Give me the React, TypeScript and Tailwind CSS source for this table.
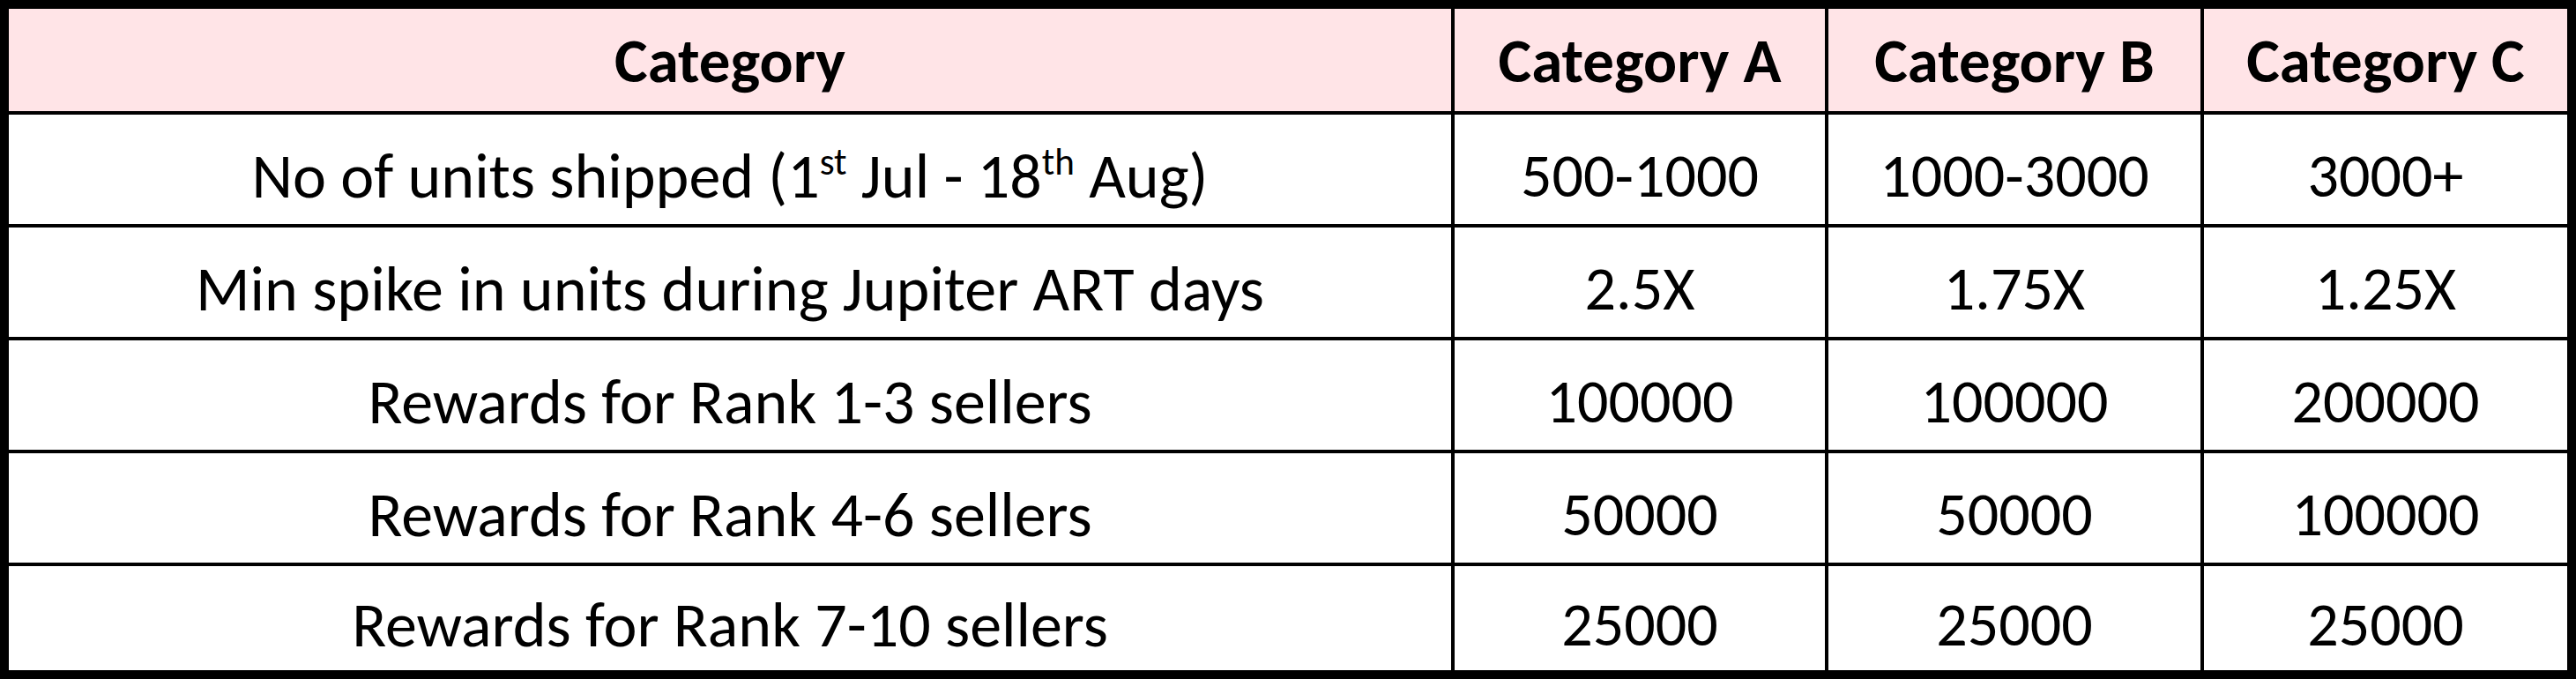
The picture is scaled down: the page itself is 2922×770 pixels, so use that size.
const HEADERS = ['Category', 'Category A', 'Category B', 'Category C'];

const sup = 'text-[0.6em] relative -top-[0.6em] align-baseline';

const ROWS: { label: React.ReactNode; values: string[] }[] = [
  {
    label: (
      <>
        No of units shipped (1<sup className={sup}>st</sup> Jul - 18<sup className={sup}>th</sup> Aug)
      </>
    ),
    values: ['500-1000', '1000-3000', '3000+'],
  },
  { label: 'Min spike in units during Jupiter ART days', values: ['2.5X', '1.75X', '1.25X'] },
  { label: 'Rewards for Rank 1-3 sellers', values: ['100000', '100000', '200000'] },
  { label: 'Rewards for Rank 4-6 sellers', values: ['50000', '50000', '100000'] },
  { label: 'Rewards for Rank 7-10 sellers', values: ['25000', '25000', '25000'] },
];

const font = "font-['Carlito','Calibri','Lato',sans-serif]";

export default function App() {
  return (
    <div className={`w-[2922px] h-[770px] bg-black p-[10px] ${font}`}>
      <div className="grid h-full gap-[4px] grid-cols-[1636px_420px_422px_412px] grid-rows-[116px_124px_124px_124px_124px_118px]">
        {HEADERS.map(h => (
          <div key={h} className="bg-[#ffe4e7] flex items-center justify-center text-[71px] font-bold text-black leading-none">
            {h}
          </div>
        ))}
        {ROWS.map((r, i) => (
          <>
            <div key={`l${i}`} className="bg-white flex items-center justify-center text-[72px] text-black leading-none pt-[14px]">
              <span>{r.label}</span>
            </div>
            {r.values.map((v, j) => (
              <div key={`v${i}-${j}`} className="bg-white flex items-center justify-center text-[70px] text-black leading-none pt-[14px]">
                {v}
              </div>
            ))}
          </>
        ))}
      </div>
    </div>
  );
}
